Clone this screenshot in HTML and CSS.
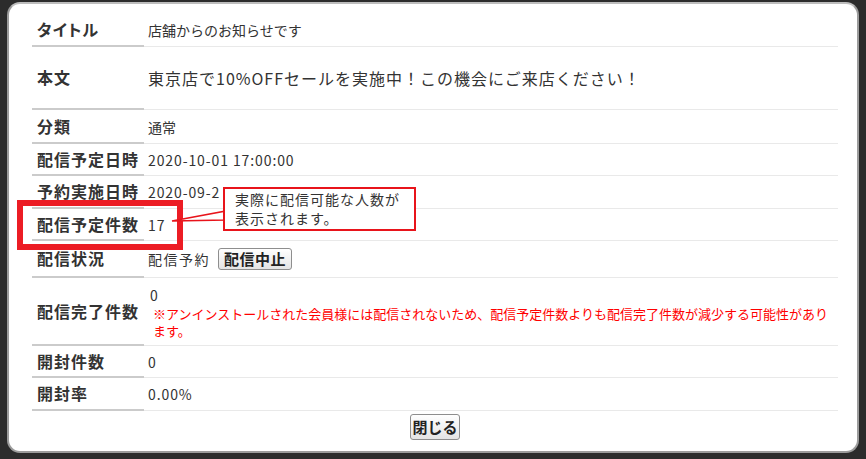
FILE: index.html
```html
<!DOCTYPE html>
<html lang="ja">
<head>
<meta charset="utf-8">
<title>配信詳細</title>
<link rel="stylesheet" href="styles.css">
</head>
<body>
<div class="dialog">
  <div class="detail">
    <div class="row h33"><div class="label">タイトル</div><div class="value">店舗からのお知らせです</div></div>
    <div class="row h63"><div class="label">本文</div><div class="value body-text">東京店で10%OFFセールを実施中！この機会にご来店ください！</div></div>
    <div class="row h34"><div class="label">分類</div><div class="value">通常</div></div>
    <div class="row h32"><div class="label">配信予定日時</div><div class="value num">2020-10-01 17:00:00</div></div>
    <div class="row h33"><div class="label">予約実施日時</div><div class="value num">2020-09-2</div></div>
    <div class="row h32"><div class="label">配信予定件数</div><div class="value num">17</div></div>
    <div class="row h37"><div class="label">配信状況</div><div class="value wide">配信予約<button class="btn btn-stop">配信中止</button></div></div>
    <div class="row h68"><div class="label">配信完了件数</div>
      <div class="value stacked">
        <div class="count">0</div>
        <div class="note">※アンインストールされた会員様には配信されないため、配信予定件数よりも配信完了件数が減少する可能性があります。</div>
      </div>
    </div>
    <div class="row h32"><div class="label">開封件数</div><div class="value num">0</div></div>
    <div class="row h33"><div class="label">開封率</div><div class="value num">0.00%</div></div>
  </div>
  <div class="actions"><button class="btn btn-close">閉じる</button></div>
</div>

<div class="highlight"></div>
<svg class="pointer" width="60" height="20" viewBox="0 0 60 20">
  <polygon points="2,14 56,4 56,13" fill="#fff" stroke="#e8141b" stroke-width="1.5" stroke-linejoin="miter"/>
</svg>
<div class="callout">実際に配信可能な人数が<br>表示されます。</div>
</body>
</html>
```

FILE: styles.css
```css
html, body {
  margin: 0;
  padding: 0;
}

body {
  width: 866px;
  height: 459px;
  overflow: hidden;
  background: #2c2c2c;
  font-family: "Noto Sans CJK JP", "Noto Sans", sans-serif;
  color: #333;
  position: relative;
}

.dialog {
  box-sizing: border-box;
  margin: 2px 0 0 7px;
  width: 852px;
  height: 451px;
  background: #fff;
  border: 2px solid #9c9c9c;
  border-top-color: #bdbdbd;
  border-radius: 13px;
  padding: 10px 19px 0 23px;
}

.detail {
  display: flex;
  flex-direction: column;
}

.row {
  display: grid;
  grid-template-columns: 112px 1fr;
}

.h32 { height: 32px; }
.h33 { height: 33px; }
.h34 { height: 34px; }
.h37 { height: 37px; }
.h63 { height: 63px; }
.h68 { height: 68px; }

.label {
  display: flex;
  align-items: center;
  padding-left: 5px;
  padding-bottom: 1px;
  border-bottom: 2px solid #cbcbcb;
  font-size: 16px;
  font-weight: bold;
  letter-spacing: 1px;
  line-height: 18px;
  color: #333;
  white-space: nowrap;
  font-feature-settings: "palt";
}

.value {
  display: flex;
  align-items: center;
  padding-left: 4px;
  border-bottom: 1px solid #e9e9e9;
  font-size: 14px;
  line-height: 18px;
  color: #333;
}

.num {
  letter-spacing: 0.9px;
}

.wide {
  letter-spacing: 1.5px;
}

.body-text {
  font-size: 16px;
  letter-spacing: 1px;
}

.stacked {
  display: block;
  padding-top: 7px;
}

.count {
  line-height: 20px;
  padding-left: 2px;
}

.note {
  color: #f00;
  font-size: 13px;
  line-height: 17px;
  margin-left: 5px;
}

.btn {
  font-family: "Noto Sans CJK JP", "Noto Sans", sans-serif;
  font-weight: bold;
  font-size: 15px;
  color: #222;
  background: linear-gradient(#ffffff, #e4e4e4);
  border: 1px solid #8e8e8e;
  border-radius: 3px;
  padding: 0 5px;
  line-height: 18px;
  cursor: pointer;
}

.btn-stop {
  height: 22px;
  margin-left: 8px;
  letter-spacing: 0.5px;
}

.actions {
  display: flex;
  justify-content: center;
  margin-top: 3px;
}

.btn-close {
  height: 26px;
  padding: 0 1px;
}

.highlight {
  position: absolute;
  left: 17px;
  top: 200px;
  width: 166px;
  height: 50px;
  box-sizing: border-box;
  border: 6px solid #ec1c24;
}

.pointer {
  position: absolute;
  left: 170px;
  top: 207px;
}

.callout {
  position: absolute;
  left: 223px;
  top: 187px;
  width: 193px;
  height: 44px;
  box-sizing: border-box;
  border: 2px solid #e8141b;
  background: #fff;
  padding: 1px 0 0 10px;
  font-size: 14px;
  letter-spacing: 1px;
  line-height: 19px;
  color: #333;
}
```
